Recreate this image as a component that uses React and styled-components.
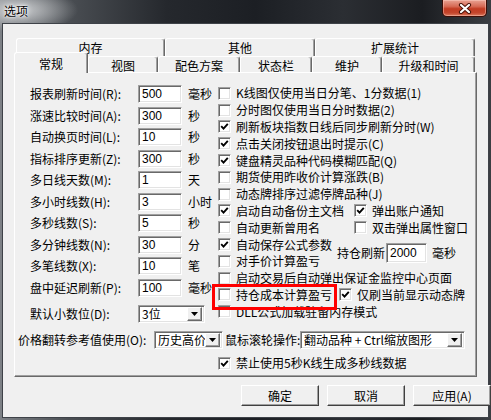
import React from 'react';
import styled, { createGlobalStyle } from 'styled-components';

const GlobalStyle = createGlobalStyle`
  html, body {
    margin: 0;
    padding: 0;
  }
  body {
    font-family: "Noto Sans CJK SC", "Liberation Sans", sans-serif;
    font-size: 12px;
    line-height: 16px;
    color: #000;
  }
`;

const fields = [
  { label: '报表刷新时间(R):', value: '500', unit: '毫秒' },
  { label: '涨速比较时间(A):', value: '300', unit: '秒' },
  { label: '自动换页时间(L):', value: '10', unit: '秒' },
  { label: '指标排序更新(Z):', value: '300', unit: '秒' },
  { label: '多日线天数(M):', value: '1', unit: '天' },
  { label: '多小时线数(H):', value: '3', unit: '小时' },
  { label: '多秒线数(S):', value: '5', unit: '秒' },
  { label: '多分钟线数(N):', value: '30', unit: '分' },
  { label: '多笔线数(X):', value: '10', unit: '笔' },
  { label: '盘中延迟刷新(P):', value: '100', unit: '毫秒' },
];

const backTabs = [
  { name: '内存', w: 149 },
  { name: '其他', w: 150 },
  { name: '扩展统计', w: 160 },
];

const frontTabs = [
  { name: '常规', w: 74, active: true },
  { name: '视图', w: 70 },
  { name: '配色方案', w: 82 },
  { name: '状态栏', w: 72 },
  { name: '维护', w: 70 },
  { name: '升级和时间', w: 93 },
];

const Tick = () => (
  <svg width="9" height="9" viewBox="0 0 9 9">
    <path d="M1.2 4.2 L3.5 6.6 L7.8 1.8" fill="none" stroke="#000" strokeWidth="1.9" />
  </svg>
);

const CloseGlyph = () => (
  <svg width="14" height="11" viewBox="0 0 14 11">
    <path d="M3 2 L11 9 M11 2 L3 9" stroke="#4a1208" strokeWidth="4.2" strokeLinecap="round" />
    <path d="M3 2 L11 9 M11 2 L3 9" stroke="#fff" strokeWidth="2.2" strokeLinecap="round" />
  </svg>
);

const DownArrow = () => (
  <svg width="7" height="4" viewBox="0 0 7 4">
    <path d="M0 0 H7 L3.5 4 Z" fill="#000" />
  </svg>
);

const Check = ({ checked, children, w, marked }) => (
  <CheckItem $w={w} $marked={marked}>
    <Box>{checked && <Tick />}</Box>
    <CheckText>{children}</CheckText>
  </CheckItem>
);

const Combo = ({ w, children }) => (
  <ComboBox $w={w}>
    <ComboText>{children}</ComboText>
    <ComboButton>
      <DownArrow />
    </ComboButton>
  </ComboBox>
);

const App = () => {
  return (
    <Window>
      <GlobalStyle />
      <TitleBar>
        <Title>选项</Title>
        <CloseButton>
          <CloseGlyph />
        </CloseButton>
      </TitleBar>
      <Client>
        <TabStrip>
          <BackRow>
            {backTabs.map((t) => (
              <Tab key={t.name} $w={t.w} $back>
                {t.name}
              </Tab>
            ))}
          </BackRow>
          <FrontRow>
            {frontTabs.map((t) => (
              <Tab key={t.name} $w={t.w} $active={t.active}>
                {t.name}
              </Tab>
            ))}
          </FrontRow>
        </TabStrip>
        <Panel>
          <Upper>
            <LeftCol>
              {fields.map((f) => (
                <FieldRow key={f.label}>
                  <FieldLabel>{f.label}</FieldLabel>
                  <TextBox $w={44}>{f.value}</TextBox>
                  <Unit>{f.unit}</Unit>
                </FieldRow>
              ))}
              <DigitsRow>
                <FieldLabel>默认小数位(D):</FieldLabel>
                <Combo w={67}>3位</Combo>
              </DigitsRow>
            </LeftCol>
            <RightCol>
              <CheckRow>
                <Check>K线图仅使用当日分笔、1分数据(1)</Check>
              </CheckRow>
              <CheckRow>
                <Check>分时图仅使用当日分时数据(2)</Check>
              </CheckRow>
              <CheckRow>
                <Check checked>刷新板块指数日线后同步刷新分时(W)</Check>
              </CheckRow>
              <CheckRow>
                <Check checked>点击关闭按钮退出时提示(C)</Check>
              </CheckRow>
              <CheckRow>
                <Check checked>键盘精灵品种代码模糊匹配(Q)</Check>
              </CheckRow>
              <CheckRow>
                <Check>期货使用昨收价计算涨跌(B)</Check>
              </CheckRow>
              <CheckRow>
                <Check>动态牌排序过滤停牌品种(J)</Check>
              </CheckRow>
              <CheckRow>
                <Check checked w={136}>启动自动备份主文档</Check>
                <Check checked>弹出账户通知</Check>
              </CheckRow>
              <CheckRow>
                <Check w={136}>自动更新曾用名</Check>
                <Check>双击弹出属性窗口</Check>
              </CheckRow>
              <HoldGroup>
                <HoldChecks>
                  <CheckRow>
                    <Check checked>自动保存公式参数</Check>
                  </CheckRow>
                  <CheckRow>
                    <Check>对手价计算盈亏</Check>
                  </CheckRow>
                </HoldChecks>
                <HoldLabel>持仓刷新</HoldLabel>
                <TextBox $w={41} $h={20}>2000</TextBox>
                <HoldUnit>毫秒</HoldUnit>
              </HoldGroup>
              <CheckRow>
                <Check>启动交易后自动弹出保证金监控中心页面</Check>
              </CheckRow>
              <CheckRow>
                <Check w={121} marked>持仓成本计算盈亏</Check>
                <Check checked>仅刷当前显示动态牌</Check>
              </CheckRow>
              <CheckRow>
                <Check>DLL公式加载驻留内存模式</Check>
              </CheckRow>
            </RightCol>
          </Upper>
          <PriceRow>
            <PriceLabel>价格翻转参考值使用(O):</PriceLabel>
            <Combo w={69}>历史高价</Combo>
            <WheelLabel>鼠标滚轮操作:</WheelLabel>
            <Combo w={165}>翻动品种 + Ctrl缩放图形</Combo>
          </PriceRow>
          <BanRow>
            <Check checked>禁止使用5秒K线生成多秒线数据</Check>
          </BanRow>
        </Panel>
        <ButtonBar>
          <Button>确定</Button>
          <Button>取消</Button>
          <Button>应用(A)</Button>
        </ButtonBar>
      </Client>
    </Window>
  );
};

const Window = styled.div`
  width: 491px;
  height: 420px;
  box-sizing: border-box;
  padding: 0 2px 2px 2px;
  display: flex;
  flex-direction: column;
  overflow: hidden;
  background:
    radial-gradient(ellipse 60px 22px at 18px 10px, rgba(210, 212, 214, 0.95), rgba(160, 163, 166, 0) 100%),
    linear-gradient(90deg, #7d8186 0%, #4a4e53 14%, #25282d 34%, #1c1f24 52%, #2b2e33 70%, #1b1d21 86%, #3b3e43 100%);
`;

const TitleBar = styled.div`
  height: 23px;
  display: flex;
  align-items: flex-start;
  justify-content: space-between;
  padding-left: 2px;
`;

const Title = styled.div`
  margin-top: 2px;
  line-height: 18px;
  color: #000;
  text-shadow: 0 0 6px #fff, 0 0 3px #fff, 0 0 1px #fff;
`;

const CloseButton = styled.div`
  width: 45px;
  height: 17px;
  box-sizing: border-box;
  margin-right: 2px;
  display: flex;
  align-items: center;
  justify-content: center;
  border: 1px solid #3c0d06;
  border-top: none;
  border-radius: 0 0 5px 5px;
  background: linear-gradient(180deg, #e9a293 0%, #d66a55 40%, #c23b22 55%, #c4452c 80%, #dc7a5e 100%);
  box-shadow: inset 0 0 0 1px rgba(255, 210, 200, 0.45);
`;

const Client = styled.div`
  flex: 1;
  background: #f0f0f0;
  border: 1px solid #3e4248;
  padding: 14px 0 0 11px;
  display: flex;
  flex-direction: column;
`;

const TabStrip = styled.div`
  width: 463px;
  display: flex;
  flex-direction: column;
`;

const BackRow = styled.div`
  display: flex;
  height: 18px;
  margin-left: 2px;
`;

const FrontRow = styled.div`
  display: flex;
  height: 16px;
  align-items: flex-end;
`;

const Tab = styled.div`
  width: ${(p) => p.$w}px;
  height: ${(p) => (p.$active ? 21 : p.$back ? 18 : 16)}px;
  margin-bottom: ${(p) => (p.$active ? -1 : 0)}px;
  box-sizing: border-box;
  position: relative;
  z-index: ${(p) => (p.$active ? 2 : 1)};
  background: #f0f0f0;
  border-top: 1px solid #fff;
  border-left: 1px solid #fff;
  border-right: 1px solid #696969;
  border-radius: 3px 3px 0 0;
  box-shadow: inset -1px 0 0 #a0a0a0;
  display: flex;
  justify-content: center;
  padding-top: ${(p) => (p.$active ? 3 : 1)}px;
  white-space: nowrap;
`;

const Panel = styled.div`
  width: 463px;
  height: 305px;
  box-sizing: border-box;
  border-top: 1px solid #fff;
  border-left: 1px solid #fff;
  border-right: 1px solid #696969;
  border-bottom: 1px solid #696969;
  box-shadow: inset -1px -1px 0 #a0a0a0;
  display: flex;
  flex-direction: column;
`;

const Upper = styled.div`
  display: flex;
  margin: 12px 0 0 15px;
  height: 238px;
`;

const LeftCol = styled.div`
  width: 188px;
  display: flex;
  flex-direction: column;
  gap: 3.5px;
`;

const FieldRow = styled.div`
  height: 18px;
  display: flex;
  align-items: center;
`;

const DigitsRow = styled(FieldRow)`
  margin-top: 5px;
`;

const FieldLabel = styled.div`
  width: 108px;
  white-space: nowrap;
`;

const sunken = `
  box-sizing: border-box;
  background: #fff;
  border-top: 1px solid #a0a0a0;
  border-left: 1px solid #a0a0a0;
  border-right: 1px solid #fff;
  border-bottom: 1px solid #fff;
  box-shadow: inset 1px 1px 0 #696969, inset -1px -1px 0 #e3e3e3;
`;

const TextBox = styled.div`
  ${sunken}
  width: ${(p) => p.$w}px;
  height: ${(p) => p.$h || 18}px;
  padding: 0 0 0 3px;
  display: flex;
  align-items: center;
  font-family: "Liberation Sans", sans-serif;
  font-size: 12px;
`;

const Unit = styled.div`
  margin-left: 6px;
  white-space: nowrap;
`;

const RightCol = styled.div`
  flex: 1;
  display: flex;
  flex-direction: column;
`;

const CheckRow = styled.div`
  height: 16.8px;
  display: flex;
  align-items: center;
`;

const CheckItem = styled.div`
  width: ${(p) => (p.$w ? `${p.$w}px` : 'auto')};
  height: 100%;
  flex-shrink: 0;
  display: flex;
  align-items: center;
  gap: 5px;
  position: relative;

  ${(p) =>
    p.$marked &&
    `
    &::after {
      content: '';
      position: absolute;
      left: -6px;
      right: 2px;
      top: -3px;
      bottom: -7px;
      border: 3px solid #ff0000;
      z-index: 3;
      pointer-events: none;
    }
  `}
`;

const Box = styled.div`
  ${sunken}
  width: 13px;
  height: 13px;
  flex-shrink: 0;
  display: flex;
  align-items: center;
  justify-content: center;
`;

const CheckText = styled.span`
  white-space: nowrap;
`;

const HoldGroup = styled.div`
  display: flex;
  align-items: center;
`;

const HoldChecks = styled.div`
  width: 119px;
  display: flex;
  flex-direction: column;
`;

const HoldLabel = styled.div`
  width: 49px;
  white-space: nowrap;
`;

const HoldUnit = styled.div`
  margin-left: 5px;
`;

const PriceRow = styled.div`
  display: flex;
  align-items: center;
  height: 18px;
  margin: 8px 0 0 3px;
`;

const PriceLabel = styled.div`
  width: 136px;
  white-space: nowrap;
`;

const WheelLabel = styled.div`
  width: 75px;
  margin-left: 2px;
  white-space: nowrap;
`;

const ComboBox = styled.div`
  ${sunken}
  width: ${(p) => p.$w}px;
  height: 18px;
  display: flex;
  align-items: center;
  padding: 2px 2px 2px 3px;
`;

const ComboText = styled.div`
  flex: 1;
  white-space: nowrap;
  overflow: hidden;
`;

const raised = `
  box-sizing: border-box;
  background: #f0f0f0;
  border-top: 1px solid #fff;
  border-left: 1px solid #fff;
  border-right: 1px solid #696969;
  border-bottom: 1px solid #696969;
  box-shadow: inset -1px -1px 0 #a0a0a0;
`;

const ComboButton = styled.div`
  ${raised}
  width: 15px;
  height: 14px;
  flex-shrink: 0;
  display: flex;
  align-items: center;
  justify-content: center;
`;

const BanRow = styled.div`
  height: 16px;
  display: flex;
  margin: 6px 0 0 203px;
`;

const ButtonBar = styled.div`
  display: flex;
  justify-content: flex-end;
  gap: 8px;
  width: 477px;
  margin-top: 8px;
`;

const Button = styled.div`
  ${raised}
  width: 78px;
  height: 21px;
  display: flex;
  align-items: center;
  justify-content: center;
  border-right-color: #404040;
  border-bottom-color: #404040;
`;

export default App;
